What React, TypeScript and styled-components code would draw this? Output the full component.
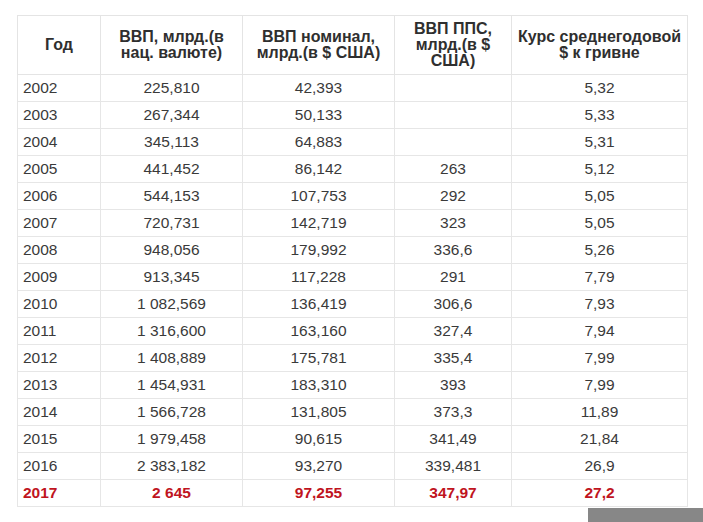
import React from "react";
import styled, { createGlobalStyle } from "styled-components";

const Global = createGlobalStyle`
  html, body { margin: 0; padding: 0; background: #ffffff; }
  body { font-family: "Liberation Sans", Arial, sans-serif; }
`;

const Page = styled.div`
  position: relative;
  width: 703px;
  height: 522px;
  overflow: hidden;
  padding: 15px 0 0 17px;
  box-sizing: border-box;
`;

const Table = styled.table`
  border-collapse: collapse;
  table-layout: fixed;
  width: 670px;
  font-family: "Liberation Sans", Arial, sans-serif;
  color: #333333;
`;

const HeadCell = styled.th`
  border: 1px solid #e4e4e4;
  height: 58px;
  padding: 0 5px;
  font-size: 16px;
  line-height: 16px;
  font-weight: bold;
  text-align: center;
  vertical-align: middle;
  color: #2f2f2f;
`;

const Row = styled.tr`
  height: 27px;
`;

const Cell = styled.td<{ $left?: boolean; $accent?: boolean }>`
  border: 1px solid #e6e6e6;
  padding: 0 5px;
  font-size: 15.5px;
  line-height: 18px;
  text-align: ${(p) => (p.$left ? "left" : "center")};
  vertical-align: middle;
  font-weight: ${(p) => (p.$accent ? "bold" : "normal")};
  color: ${(p) => (p.$accent ? "#c0141e" : "#3a3a3a")};
`;

const ScrollTab = styled.div`
  position: absolute;
  left: 588px;
  top: 508px;
  width: 115px;
  height: 14px;
  background: #878787;
`;

const widths = [83, 142, 152, 117, 176];

const headers = [
  "Год",
  "ВВП, млрд.(в нац. валюте)",
  "ВВП номинал, млрд.(в $ США)",
  "ВВП ППС, млрд.(в $ США)",
  "Курс среднегодовой $ к гривне",
];

const rows: string[][] = [
  ["2002", "225,810", "42,393", "", "5,32"],
  ["2003", "267,344", "50,133", "", "5,33"],
  ["2004", "345,113", "64,883", "", "5,31"],
  ["2005", "441,452", "86,142", "263", "5,12"],
  ["2006", "544,153", "107,753", "292", "5,05"],
  ["2007", "720,731", "142,719", "323", "5,05"],
  ["2008", "948,056", "179,992", "336,6", "5,26"],
  ["2009", "913,345", "117,228", "291", "7,79"],
  ["2010", "1 082,569", "136,419", "306,6", "7,93"],
  ["2011", "1 316,600", "163,160", "327,4", "7,94"],
  ["2012", "1 408,889", "175,781", "335,4", "7,99"],
  ["2013", "1 454,931", "183,310", "393", "7,99"],
  ["2014", "1 566,728", "131,805", "373,3", "11,89"],
  ["2015", "1 979,458", "90,615", "341,49", "21,84"],
  ["2016", "2 383,182", "93,270", "339,481", "26,9"],
  ["2017", "2 645", "97,255", "347,97", "27,2"],
];

export default function App() {
  return (
    <>
      <Global />
      <Page>
        <Table>
          <colgroup>
            {widths.map((w, i) => (
              <col key={i} style={{ width: w }} />
            ))}
          </colgroup>
          <thead>
            <tr>
              {headers.map((h) => (
                <HeadCell key={h}>{h}</HeadCell>
              ))}
            </tr>
          </thead>
          <tbody>
            {rows.map((r, ri) => {
              const accent = ri === rows.length - 1;
              return (
                <Row key={r[0]}>
                  {r.map((c, ci) => (
                    <Cell key={ci} $left={ci === 0} $accent={accent}>
                      {c}
                    </Cell>
                  ))}
                </Row>
              );
            })}
          </tbody>
        </Table>
        <ScrollTab />
      </Page>
    </>
  );
}
